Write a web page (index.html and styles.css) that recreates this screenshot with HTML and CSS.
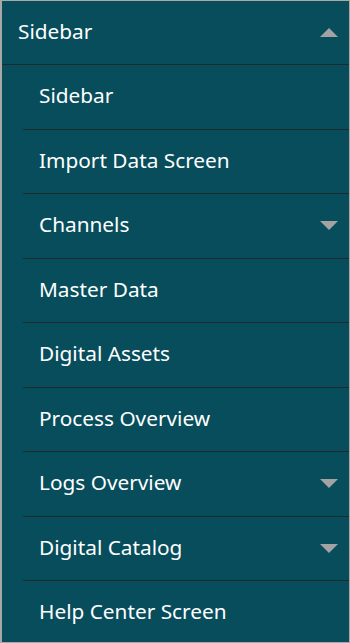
FILE: index.html
```html
<!DOCTYPE html>
<html>
<head>
    <title>Sidebar</title>
    <link rel="stylesheet" href="styles.css">
</head>
<body>
    <div class="sidebar">
        <div class="menu-header">
            <span>Sidebar</span>
            <span class="arrow arrow-up"></span>
        </div>
        <ul class="menu-list">
            <li><span>Sidebar</span></li>
            <li><span>Import Data Screen</span></li>
            <li><span>Channels</span><span class="arrow arrow-down"></span></li>
            <li><span>Master Data</span></li>
            <li><span>Digital Assets</span></li>
            <li><span>Process Overview</span></li>
            <li><span>Logs Overview</span><span class="arrow arrow-down"></span></li>
            <li><span>Digital Catalog</span><span class="arrow arrow-down"></span></li>
            <li class="last"><span>Help Center Screen</span></li>
        </ul>
    </div>
</body>
</html>
```

FILE: styles.css
```css
/* Sidebar menu */
body {
    margin: 0;
    padding: 0;
    font-family: "Noto Sans", "Open Sans", sans-serif;
}

.sidebar {
    width: 350px;
    height: 643px;
    box-sizing: border-box;
    background-color: #074d5c;
    border: 1px solid #a8a8a8;
    border-left-width: 2px;
    color: #fff;
    overflow: hidden;
}

.menu-header {
    display: flex;
    align-items: center;
    justify-content: space-between;
    height: 63px;
    padding: 0 11px 0 16px;
    font-size: 1.3rem;
    border-bottom: 1px solid #1f2a2c;
}

.menu-header span:first-child,
.menu-list li span:first-child {
    margin-bottom: 3px;
}

.menu-list {
    list-style: none;
    margin: 0;
    padding: 0 0 0 21px;
}

.menu-list li {
    display: flex;
    align-items: center;
    justify-content: space-between;
    height: 63.5px;
    padding: 0 11px 0 16px;
    font-size: 1.3rem;
    border-bottom: 1px solid #1f2a2c;
}

.menu-list li.last {
    border-bottom: none;
}

.arrow {
    width: 0;
    height: 0;
    border-left: 9px solid transparent;
    border-right: 9px solid transparent;
}

.arrow-up {
    border-bottom: 9px solid #a3a3a3;
}

.arrow-down {
    border-top: 9px solid #a3a3a3;
}
```
